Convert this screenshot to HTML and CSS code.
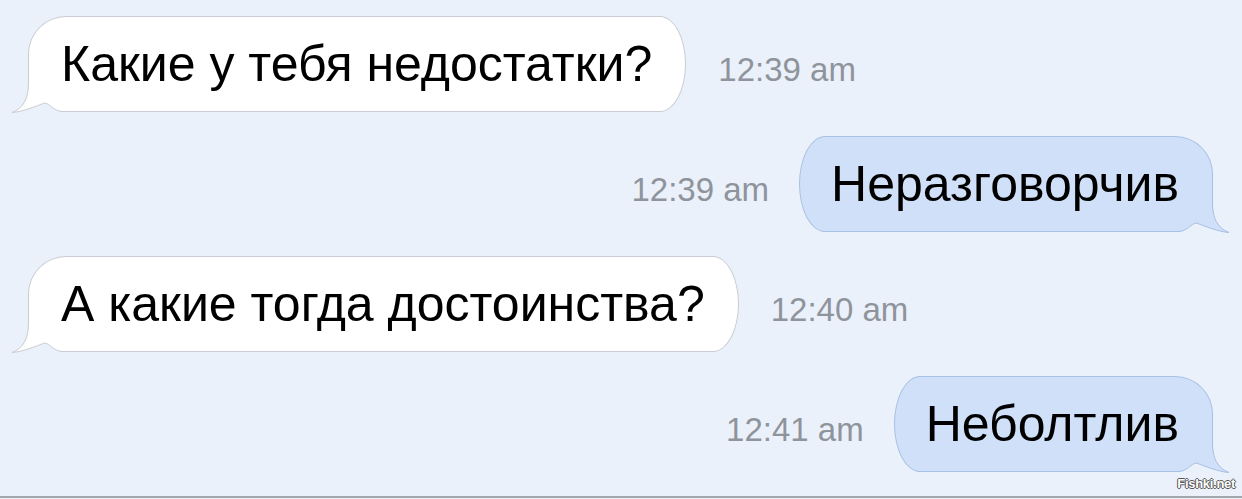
FILE: index.html
```html
<!DOCTYPE html>
<html lang="ru">
<head>
    <meta charset="UTF-8">
    <title>Переписка</title>
    <link rel="stylesheet" href="styles.css">
</head>
<body>
    <div class="chat">
        <div class="row in">
            <div class="bubble">
                Какие у тебя недостатки?
                <svg class="tail" width="50" height="30" viewBox="0 0 50 30">
                    <path class="erase" d="M0,30.5 C10,30 24,24 33,21 C38,22 42,29 50,29.5 L50,31.5 L-1,31.5 Z"/>
                    <path class="fill" d="M16.5,0 C16.5,16 12,26 0,30.5 C10,30 24,24 33,21 C38,22 42,29 50,29.5 L50,0 Z"/>
                    <path class="edge" d="M16.5,0 C16.5,16 12,26 0,30.5 C10,30 24,24 33,21 C38,22 42,29 50,29.5"/>
                </svg>
            </div>
            <span class="time">12:39 am</span>
        </div>

        <div class="row out">
            <span class="time">12:39 am</span>
            <div class="bubble">
                Неразговорчив
                <svg class="tail" width="50" height="30" viewBox="0 0 50 30">
                    <path class="erase" d="M0,30.5 C10,30 24,24 33,21 C38,22 42,29 50,29.5 L50,31.5 L-1,31.5 Z"/>
                    <path class="fill" d="M16.5,0 C16.5,16 12,26 0,30.5 C10,30 24,24 33,21 C38,22 42,29 50,29.5 L50,0 Z"/>
                    <path class="edge" d="M16.5,0 C16.5,16 12,26 0,30.5 C10,30 24,24 33,21 C38,22 42,29 50,29.5"/>
                </svg>
            </div>
        </div>

        <div class="row in">
            <div class="bubble">
                А какие тогда достоинства?
                <svg class="tail" width="50" height="30" viewBox="0 0 50 30">
                    <path class="erase" d="M0,30.5 C10,30 24,24 33,21 C38,22 42,29 50,29.5 L50,31.5 L-1,31.5 Z"/>
                    <path class="fill" d="M16.5,0 C16.5,16 12,26 0,30.5 C10,30 24,24 33,21 C38,22 42,29 50,29.5 L50,0 Z"/>
                    <path class="edge" d="M16.5,0 C16.5,16 12,26 0,30.5 C10,30 24,24 33,21 C38,22 42,29 50,29.5"/>
                </svg>
            </div>
            <span class="time">12:40 am</span>
        </div>

        <div class="row out">
            <span class="time">12:41 am</span>
            <div class="bubble">
                Неболтлив
                <svg class="tail" width="50" height="30" viewBox="0 0 50 30">
                    <path class="erase" d="M0,30.5 C10,30 24,24 33,21 C38,22 42,29 50,29.5 L50,31.5 L-1,31.5 Z"/>
                    <path class="fill" d="M16.5,0 C16.5,16 12,26 0,30.5 C10,30 24,24 33,21 C38,22 42,29 50,29.5 L50,0 Z"/>
                    <path class="edge" d="M16.5,0 C16.5,16 12,26 0,30.5 C10,30 24,24 33,21 C38,22 42,29 50,29.5"/>
                </svg>
            </div>
        </div>

        <span class="watermark">Fishki.net</span>
    </div>
</body>
</html>
```

FILE: styles.css
```css
body {
    margin: 0;
    background: #ebf1fa;
    font-family: "Liberation Sans", Arial, sans-serif;
}
.chat {
    position: relative;
    height: 498px;
    box-sizing: border-box;
    padding: 16px 29px 0 28px;
    display: flex;
    flex-direction: column;
    gap: 24px;
    border-bottom: 2px solid #a2a6ad;
}
.row {
    display: flex;
    align-items: center;
    gap: 32px;
}
.row.out {
    justify-content: flex-end;
    gap: 30px;
}
.bubble {
    position: relative;
    height: 96px;
    box-sizing: border-box;
    display: flex;
    align-items: center;
    padding: 0 33px 0 32px;
    font-size: 50px;
    color: #000;
    white-space: nowrap;
}
.in .bubble {
    background: #fff;
    border: 1px solid #c9ccd2;
    border-radius: 38px 26px 26px 0 / 38px 48px 48px 0;
}
.out .bubble {
    background: #cfe0f8;
    border: 1px solid #a7c1e4;
    border-radius: 26px 38px 0 26px / 48px 38px 0 48px;
    padding: 0 33px 0 31px;
}
.time {
    font-size: 33px;
    color: #8f949c;
    margin-top: 11px;
    white-space: nowrap;
}
.tail {
    position: absolute;
    bottom: -1px;
    overflow: visible;
}
.in .tail {
    left: -17px;
}
.out .tail {
    right: -17px;
    transform: scaleX(-1);
}
.tail .erase {
    fill: #ebf1fa;
}
.tail .edge {
    fill: none;
    stroke-width: 1;
}
.in .tail .fill {
    fill: #fff;
}
.in .tail .edge {
    stroke: #c9ccd2;
}
.out .tail .fill {
    fill: #cfe0f8;
}
.out .tail .edge {
    stroke: #a7c1e4;
}
.watermark {
    position: absolute;
    right: 7px;
    bottom: 5px;
    font-size: 13px;
    font-weight: bold;
    color: #fff;
    letter-spacing: -0.3px;
    text-shadow: -1px 0 #555, 1px 0 #555, 0 -1px #555, 0 1px #555;
}
```
